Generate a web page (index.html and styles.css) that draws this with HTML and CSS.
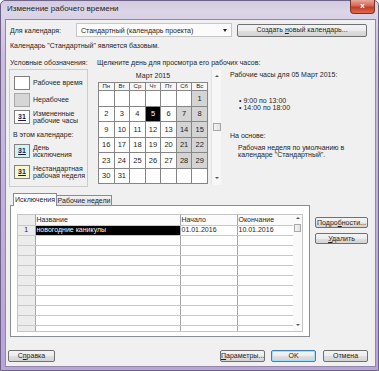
FILE: index.html
```html
<!DOCTYPE html>
<html lang="ru">
<head>
    <meta charset="UTF-8">
    <meta name="viewport" content="width=device-width, initial-scale=1.0">
    <title>Изменение рабочего времени</title>
    <link rel="stylesheet" href="styles.css">
</head>
<body>
<div class="window">
    <div class="titlebar">
        <span class="title">Изменение рабочего времени</span>
        <div class="close-btn">x</div>
    </div>

    <div class="client">
        <div class="calendar-row">
            <span class="label">Для календаря:</span>
            <div class="combo">
                <span>Стандартный (календарь проекта)</span>
                <span class="combo-arrow"></span>
            </div>
            <button class="btn btn-create">Создать <u>н</u>овый календарь...</button>
        </div>

        <div class="base-note">Календарь "Стандартный" является базовым.</div>

        <div class="main">
            <!-- условные обозначения -->
            <div class="legend-col">
                <div class="caption">Условные обозначения:</div>
                <div class="legend">
                    <div class="legend-item"><span class="swatch"></span>Рабочее время</div>
                    <div class="legend-item"><span class="swatch swatch-off"></span>Нерабочее</div>
                    <div class="legend-item"><span class="swatch">31</span><span>Измененные<br>рабочие часы</span></div>
                    <div class="legend-heading">В этом календаре:</div>
                    <div class="legend-item item-exception"><span class="swatch swatch-exception">31</span><span>День<br>исключения</span></div>
                    <div class="legend-item item-week"><span class="swatch swatch-week">31</span><span>Нестандартная<br>рабочая неделя</span></div>
                </div>
            </div>

            <!-- календарь и рабочие часы -->
            <div class="view-col">
                <div class="caption">Щелкните день для просмотра его рабочих часов:</div>
                <div class="view-body">
                    <div class="cal-block">
                        <div class="month">Март 2015</div>
                        <div class="cal-grid">
                            <div class="dow">Пн</div><div class="dow">Вт</div><div class="dow">Ср</div><div class="dow">Чт</div><div class="dow">Пт</div><div class="dow">Сб</div><div class="dow">Вс</div>
                            <div class="day"></div><div class="day"></div><div class="day"></div><div class="day"></div><div class="day"></div><div class="day"></div><div class="day off">1</div>
                            <div class="day">2</div><div class="day">3</div><div class="day">4</div><div class="day selected">5</div><div class="day">6</div><div class="day off">7</div><div class="day off">8</div>
                            <div class="day">9</div><div class="day">10</div><div class="day">11</div><div class="day">12</div><div class="day">13</div><div class="day off">14</div><div class="day off">15</div>
                            <div class="day">16</div><div class="day">17</div><div class="day">18</div><div class="day">19</div><div class="day">20</div><div class="day off">21</div><div class="day off">22</div>
                            <div class="day">23</div><div class="day">24</div><div class="day">25</div><div class="day">26</div><div class="day">27</div><div class="day off">28</div><div class="day off">29</div>
                            <div class="day">30</div><div class="day">31</div><div class="day"></div><div class="day"></div><div class="day"></div><div class="day"></div><div class="day"></div>
                        </div>
                    </div>
                    <div class="vscroll cal-scroll">
                        <span class="arrow-up"></span>
                        <span class="thumb"></span>
                        <span class="arrow-down"></span>
                    </div>
                    <div class="info">
                        <div class="info-title">Рабочие часы для 05 Март 2015:</div>
                        <ul class="hours">
                            <li>9:00 по 13:00</li>
                            <li>14:00 по 18:00</li>
                        </ul>
                        <div class="info-sub">На основе:</div>
                        <div class="info-note">Рабочая неделя по умолчанию в<br>календаре "Стандартный".</div>
                    </div>
                </div>
            </div>
        </div>

        <div class="exceptions">
            <div class="tabs-col">
                <div class="tabstrip">
                    <div class="tab active">Исключения</div>
                    <div class="tab tab-weeks">Рабочие недели</div>
                </div>
                <div class="panel">
                    <div class="grid-wrap">
                        <table class="grid">
                            <colgroup>
                                <col class="col-num"><col class="col-name"><col class="col-start"><col class="col-end">
                            </colgroup>
                            <tr class="head"><td class="num"></td><td>Название</td><td>Начало</td><td>Окончание</td></tr>
                            <tr><td class="num">1</td><td class="picked">новогодние каникулы</td><td>01.01.2016</td><td>10.01.2016</td></tr>
                            <tr><td class="num"></td><td></td><td></td><td></td></tr>
                            <tr><td class="num"></td><td></td><td></td><td></td></tr>
                            <tr><td class="num"></td><td></td><td></td><td></td></tr>
                            <tr><td class="num"></td><td></td><td></td><td></td></tr>
                            <tr><td class="num"></td><td></td><td></td><td></td></tr>
                            <tr><td class="num"></td><td></td><td></td><td></td></tr>
                            <tr><td class="num"></td><td></td><td></td><td></td></tr>
                            <tr><td class="num"></td><td></td><td></td><td></td></tr>
                            <tr><td class="num"></td><td></td><td></td><td></td></tr>
                            <tr><td class="num"></td><td></td><td></td><td></td></tr>
                            <tr><td class="num"></td><td></td><td></td><td></td></tr>
                        </table>
                    </div>
                    <div class="vscroll grid-scroll">
                        <span class="arrow-up"></span>
                        <span class="thumb"></span>
                        <span class="spacer"></span>
                        <span class="arrow-down"></span>
                    </div>
                </div>
            </div>
            <div class="side-buttons">
                <button class="btn">Подро<u>б</u>ности...</button>
                <button class="btn"><u>У</u>далить</button>
            </div>
        </div>

        <div class="footer">
            <button class="btn btn-help">С<u>п</u>равка</button>
            <button class="btn"><u>П</u>араметры...</button>
            <button class="btn btn-ok">OK</button>
            <button class="btn">Отмена</button>
        </div>
    </div>
</div>
</body>
</html>
```

FILE: styles.css
```css
* {
    box-sizing: border-box;
}
body {
    margin: 0;
    font-family: "Liberation Sans", Arial, sans-serif;
    font-size: 7px;
    color: #1e1e1e;
    background: #ffffff;
    overflow: hidden;
}

/* рамка окна */
.window {
    width: 379px;
    height: 371px;
    padding: 0 3px 4px 5px;
    border: 1px solid #6f6289;
    border-radius: 5px 5px 0 0;
    background: linear-gradient(to bottom, #d2cadf 0, #dcd5e7 10px, #c9bcdd 60px, #b8a4d6 100%);
    display: flex;
    flex-direction: column;
}
.titlebar {
    height: 19px;
    display: flex;
    align-items: flex-start;
}
.title {
    margin: 3px 0 0 1px;
    font-size: 8px;
    line-height: 10px;
    color: #222222;
}
.close-btn {
    margin-left: auto;
    margin-top: -1px;
    width: 25px;
    height: 14px;
    border: 1px solid #7a3328;
    border-top: none;
    border-radius: 0 0 4px 4px;
    background: linear-gradient(to bottom, #e8a99c 0%, #d8654f 45%, #c43d23 55%, #d86c54 100%);
    color: #ffffff;
    font-size: 8px;
    font-weight: bold;
    line-height: 12px;
    text-align: center;
}
.client {
    height: 346px;
    background: #f0f0f0;
    box-shadow: 0 0 0 1px #9384ad;
    display: flex;
    flex-direction: column;
}

/* кнопки */
.btn {
    font: inherit;
    color: inherit;
    height: 12px;
    padding: 0;
    border: 1px solid #707070;
    border-radius: 2px;
    background: linear-gradient(to bottom, #f4f4f4 0%, #ececec 50%, #dfdfdf 51%, #d3d3d3 100%);
    line-height: 10px;
    text-align: center;
    white-space: nowrap;
}

/* верхняя строка */
.calendar-row {
    display: flex;
    align-items: center;
    height: 14px;
    margin-top: 3px;
}
.calendar-row .label {
    width: 70px;
    padding-left: 4px;
}
.combo {
    width: 156px;
    height: 14px;
    border: 1px solid #c6c6c6;
    background: #fbfbfb;
    display: flex;
    align-items: center;
    padding-left: 4px;
}
.combo-arrow {
    margin-left: auto;
    margin-right: 4px;
    border-left: 2.5px solid transparent;
    border-right: 2.5px solid transparent;
    border-top: 3px solid #222222;
}
.btn-create {
    margin-left: 5px;
    width: 130px;
    height: 13px;
}
.base-note {
    margin-top: 4px;
    padding-left: 4px;
    line-height: 10px;
}

/* средняя часть */
.main {
    display: flex;
    margin-top: 7px;
    height: 130px;
}
.legend-col {
    width: 86px;
    padding-left: 3px;
    flex: none;
}
.caption {
    line-height: 10px;
    padding-left: 1px;
    white-space: nowrap;
}
.legend {
    margin-top: 1px;
    width: 79px;
    height: 118px;
    border: 1px solid #cccccc;
    padding: 6px 0 0 4px;
}
.legend-item {
    display: flex;
    align-items: center;
    height: 14px;
    margin-top: 3px;
    line-height: 7.5px;
    white-space: nowrap;
}
.legend-item:first-child {
    margin-top: 0;
}
.legend-heading {
    margin: 7px 0 0 -1px;
    line-height: 8px;
}
.legend .item-exception {
    margin-top: 5px;
}
.legend .item-week {
    margin-top: 7px;
}
.swatch {
    flex: none;
    width: 16px;
    height: 14px;
    margin-right: 3px;
    border: 1px solid #808080;
    background: #ffffff;
    font-weight: bold;
    font-size: 7px;
    line-height: 12px;
    text-align: center;
    text-decoration: underline;
    color: #1a1a40;
}
.swatch-off {
    background: #d6d6d6;
    border-color: #a8a8a8;
}
.swatch-exception {
    background: #d2f3f3;
}
.swatch-week {
    background: #f6f6cf;
}

.view-col {
    margin-left: 4px;
    flex: 1;
}
.view-body {
    display: flex;
    margin-top: 2px;
}
.cal-block {
    margin-left: 2px;
    width: 110px;
}
.month {
    height: 12px;
    line-height: 12px;
    text-align: center;
}
.cal-grid {
    display: grid;
    grid-template-columns: repeat(7, 1fr);
    grid-template-rows: 7px repeat(6, 1fr);
    gap: 1px;
    height: 102px;
    border: 1px solid #868686;
    background: #868686;
}
.dow {
    background: #f6f6f6;
    font-size: 6px;
    line-height: 7px;
    text-align: center;
}
.day {
    background: #ffffff;
    font-size: 7.5px;
    display: flex;
    align-items: center;
    justify-content: center;
}
.day.off {
    background: #d4d4d4;
}
.day.selected {
    background: #000000;
    color: #ffffff;
}

/* полосы прокрутки */
.vscroll {
    display: flex;
    flex-direction: column;
    align-items: center;
    width: 10px;
}
.arrow-up,
.arrow-down {
    width: 0;
    height: 0;
    border-left: 2px solid transparent;
    border-right: 2px solid transparent;
}
.arrow-up {
    border-bottom: 2px solid #555555;
}
.arrow-down {
    border-top: 2px solid #555555;
}
.thumb {
    width: 8px;
    height: 8px;
    border: 1px solid #a8a8a8;
    background: linear-gradient(to right, #f4f4f4, #e2e2e2);
}
.cal-scroll {
    margin-left: 3px;
    height: 115px;
    padding: 5px 0 6px;
    justify-content: space-between;
    border-left: 1px solid #e4e4e4;
    background: #f7f7f7;
}

.info {
    margin-left: 9px;
    padding-top: 1px;
    white-space: nowrap;
}
.info-title {
    line-height: 8px;
}
.hours {
    margin: 19px 0 0;
    padding: 0 0 0 9px;
    list-style: none;
    line-height: 6.7px;
}
.hours li::before {
    content: "\2022";
    margin-right: 2px;
}
.info-sub {
    margin-top: 21px;
    line-height: 8px;
}
.info-note {
    margin-top: 4px;
    padding-left: 8px;
    line-height: 7px;
}

/* исключения */
.exceptions {
    display: flex;
    margin-top: 5px;
    padding-left: 4px;
}
.tabs-col {
    width: 300px;
    flex: none;
}
.tabstrip {
    display: flex;
    align-items: flex-end;
    height: 12px;
    padding-left: 3px;
    position: relative;
    z-index: 1;
}
.tab {
    height: 10px;
    border: 1px solid #898c95;
    border-bottom: none;
    line-height: 9px;
    text-align: center;
    background: linear-gradient(to bottom, #f3f3f3, #dcdcdc);
}
.tab.active {
    width: 44px;
    height: 13px;
    margin-bottom: -1px;
    line-height: 12px;
    background: #ffffff;
}
.tab-weeks {
    width: 55px;
    border-left: none;
}
.panel {
    height: 132px;
    border: 1px solid #898c95;
    background: #ffffff;
    padding: 8px 0 0 6px;
    display: flex;
    align-items: flex-start;
}
.grid-wrap {
    width: 276px;
    height: 118px;
    overflow: hidden;
    border: 1px solid #c4c4c4;
    border-right: none;
}
.grid {
    width: 275px;
    border-collapse: collapse;
    table-layout: fixed;
}
.col-num { width: 17px; }
.col-name { width: 145px; }
.col-start { width: 57px; }
.col-end { width: 56px; }
.grid td {
    height: 10px;
    padding: 0 1px;
    border-bottom: 1px solid #c8c8c8;
    border-right: 1px solid #a6a6a6;
    line-height: 8px;
    white-space: nowrap;
    overflow: hidden;
}
.grid .head td {
    height: 10px;
    background: #fbfbfb;
}
.grid td.num {
    background: #ececec;
    text-align: center;
}
.grid td.picked {
    background: #000000;
    color: #ffffff;
}
.grid-scroll {
    height: 118px;
    padding: 2px 0 5px;
    border: 1px solid #c4c4c4;
    border-left: none;
    background: #fafafa;
}
.grid-scroll .thumb {
    margin-top: 5px;
    width: 7px;
}
.spacer {
    flex: 1;
}
.side-buttons {
    display: flex;
    flex-direction: column;
    gap: 5px;
    margin-left: 5px;
    padding-top: 24px;
}
.side-buttons .btn {
    width: 53px;
    height: 11px;
    line-height: 9px;
}

/* нижние кнопки */
.footer {
    display: flex;
    margin-top: 13px;
    padding: 0 7px 0 2px;
}
.footer .btn {
    width: 45px;
}
.footer .btn-help {
    width: 47px;
    margin-right: auto;
}
.footer .btn-ok {
    margin: 0 7px 0 6px;
    border-color: #3c7fb1;
    box-shadow: inset 0 0 0 1px #a6dcf5;
}
```
